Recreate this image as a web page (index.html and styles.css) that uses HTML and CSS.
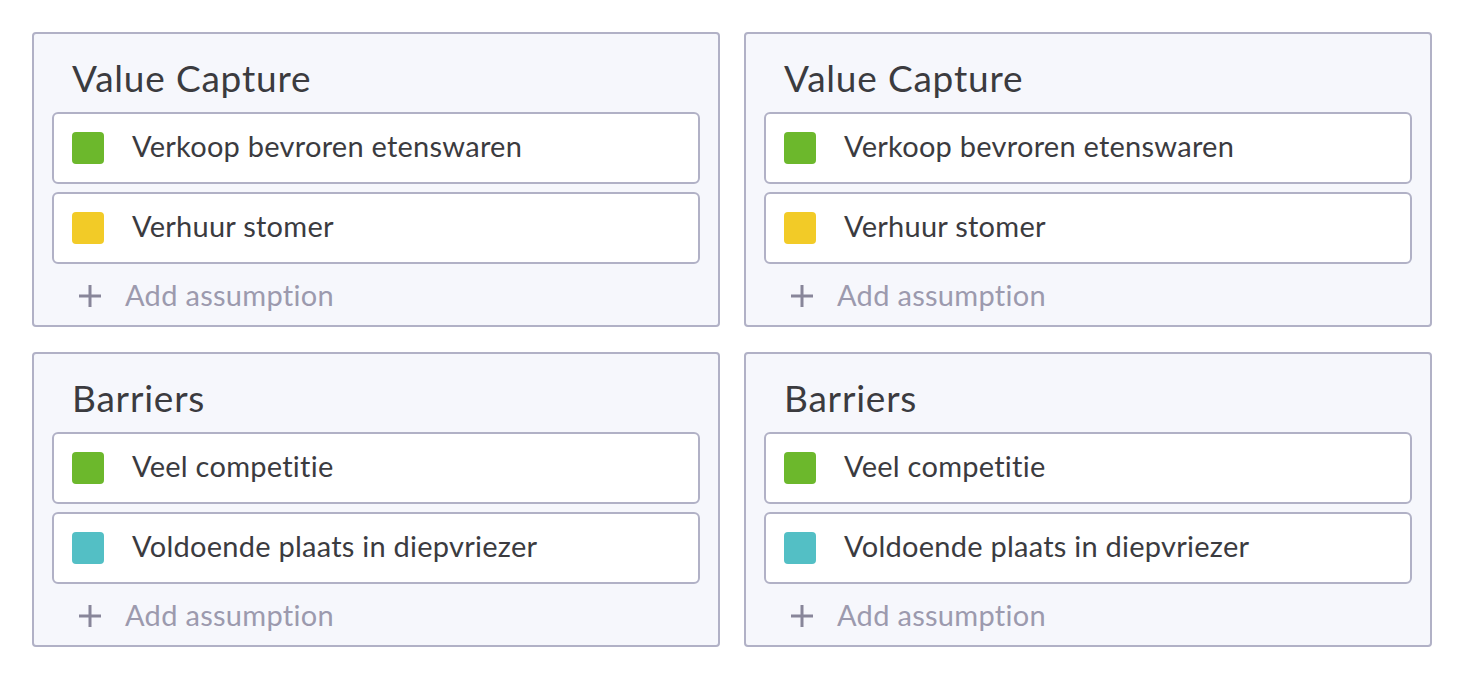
FILE: index.html
```html
<!DOCTYPE html>
<html lang="en">
<head>
    <meta charset="UTF-8">
    <title>Assumptions</title>
    <link rel="stylesheet" href="styles.css">
</head>
<body>
    <div class="board">
        <div class="card">
            <h2 class="card-title">Value Capture</h2>
            <div class="item"><span class="dot green"></span><span class="label">Verkoop bevroren etenswaren</span></div>
            <div class="item"><span class="dot yellow"></span><span class="label">Verhuur stomer</span></div>
            <div class="add">
                <svg class="plus" viewBox="0 0 24 24"><path d="M12 1v22M1 12h22" /></svg>
                <span class="label">Add assumption</span>
            </div>
        </div>
        <div class="card">
            <h2 class="card-title">Value Capture</h2>
            <div class="item"><span class="dot green"></span><span class="label">Verkoop bevroren etenswaren</span></div>
            <div class="item"><span class="dot yellow"></span><span class="label">Verhuur stomer</span></div>
            <div class="add">
                <svg class="plus" viewBox="0 0 24 24"><path d="M12 1v22M1 12h22" /></svg>
                <span class="label">Add assumption</span>
            </div>
        </div>
        <div class="card">
            <h2 class="card-title">Barriers</h2>
            <div class="item"><span class="dot green"></span><span class="label">Veel competitie</span></div>
            <div class="item"><span class="dot teal"></span><span class="label">Voldoende plaats in diepvriezer</span></div>
            <div class="add">
                <svg class="plus" viewBox="0 0 24 24"><path d="M12 1v22M1 12h22" /></svg>
                <span class="label">Add assumption</span>
            </div>
        </div>
        <div class="card">
            <h2 class="card-title">Barriers</h2>
            <div class="item"><span class="dot green"></span><span class="label">Veel competitie</span></div>
            <div class="item"><span class="dot teal"></span><span class="label">Voldoende plaats in diepvriezer</span></div>
            <div class="add">
                <svg class="plus" viewBox="0 0 24 24"><path d="M12 1v22M1 12h22" /></svg>
                <span class="label">Add assumption</span>
            </div>
        </div>
    </div>
</body>
</html>
```

FILE: styles.css
```css
body {
    margin: 0;
    background: #ffffff;
    font-family: Lato, "Open Sans", sans-serif;
    color: #3b3b3f;
}
.board {
    display: grid;
    grid-template-columns: 688px 688px;
    column-gap: 24px;
    row-gap: 25px;
    padding: 32px;
}
.card {
    background: #f6f7fc;
    border: 2px solid #b1b1c6;
    border-radius: 4px;
    padding: 20px 18px 5px 18px;
    display: flex;
    flex-direction: column;
    gap: 8px;
}
.card-title {
    margin: 0 0 2px 20px;
    font-size: 37px;
    line-height: 48px;
    font-weight: 400;
    letter-spacing: 0.8px;
}
.item {
    height: 68px;
    background: #ffffff;
    border: 2px solid #b1b1c6;
    border-radius: 6px;
    display: flex;
    align-items: center;
    padding: 0 18px;
    gap: 28px;
}
.dot {
    width: 32px;
    height: 32px;
    border-radius: 4px;
    flex: none;
}
.green { background: #6cb82c; }
.yellow { background: #f2cb27; }
.teal { background: #53bfc5; }
.label {
    font-size: 29px;
    line-height: 36px;
    letter-spacing: 0.25px;
    padding-bottom: 4px;
}
.add {
    height: 48px;
    display: flex;
    align-items: center;
    gap: 23px;
    padding-left: 26px;
    color: #9c9aae;
}
.add .label {
    letter-spacing: 0.3px;
    padding-bottom: 3px;
}
.plus {
    width: 24px;
    height: 24px;
    flex: none;
}
.plus path {
    stroke: #88869a;
    stroke-width: 3;
    fill: none;
}
```
